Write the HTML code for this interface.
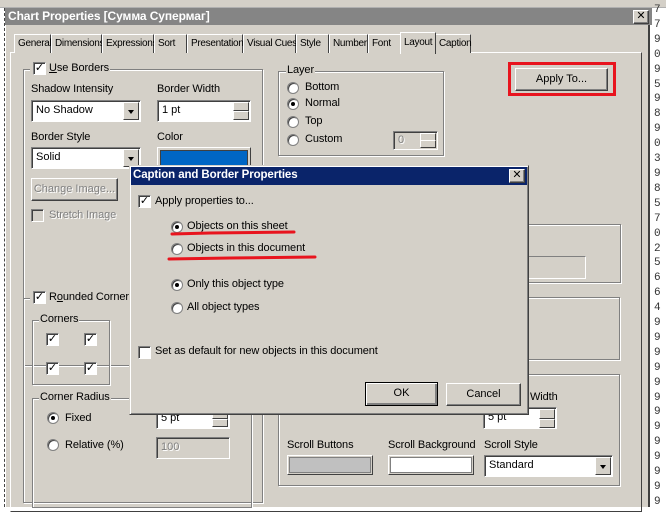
<!DOCTYPE html>
<html><head><meta charset="utf-8"><style>
*{box-sizing:border-box;margin:0;padding:0}
body{width:666px;height:507px;overflow:hidden;background:#fff;font-family:"Liberation Sans","DejaVu Sans",sans-serif;font-size:11px;color:#000;position:relative}
.a{position:absolute}
.t{position:absolute;white-space:nowrap;font-size:11px;letter-spacing:-0.1px}
.grp{position:absolute;border:1px solid #808080;box-shadow:1px 1px 0 #fff, inset 1px 1px 0 #fff}
.in{position:absolute;background:#fff;border:1px solid;border-color:#808080 #fff #fff #808080;box-shadow:inset 1px 1px 0 #404040;padding:3px 0 0 4px;font-size:11px;white-space:nowrap}
.btn{position:absolute;background:#d4d0c8;border:1px solid;border-color:#fff #404040 #404040 #fff;box-shadow:inset -1px -1px 0 #808080;text-align:center;font-size:11px;white-space:nowrap}
.cb{position:absolute;width:13px;height:13px;background:#fff;border:1px solid;border-color:#808080 #fff #fff #808080;box-shadow:inset 1px 1px 0 #404040;font-size:11px;line-height:10px;text-align:center;font-weight:bold}
.rd{position:absolute;width:12px;height:12px;border-radius:50%;background:#fff;border:1px solid #808080;box-shadow:inset 1px 1px 0 #404040}
.rd.on::after{content:"";position:absolute;left:3px;top:3px;width:4px;height:4px;border-radius:50%;background:#000}
.dd{position:absolute;right:1px;top:1px;bottom:1px;width:16px;background:#d4d0c8;border:1px solid;border-color:#fff #404040 #404040 #fff}
.dd::after{content:"";position:absolute;left:4px;top:7px;border:3px solid transparent;border-top:4px solid #000}
.sp{position:absolute;width:16px;background:#d4d0c8;border:1px solid;border-color:#fff #404040 #404040 #fff}
.tab{position:absolute;top:34px;height:19px;border:1px solid;border-color:#fff #404040 transparent #fff;border-bottom:none;padding:3px 0 0 3px;font-size:10px;letter-spacing:-0.3px;white-space:nowrap;background:#d4d0c8}
.dis{color:#808080;text-shadow:1px 1px 0 #fff}
</style></head><body>
<div class="a" style="left:0;top:0;width:666px;height:8px;background:#d4d0c8;border-bottom:1px solid #b0b0b0"></div>
<div class="a" style="left:0;top:8px;width:5px;height:499px;background:#fff;border-right:1px dashed #444"></div>
<div class="a" style="left:648px;top:8px;width:18px;height:499px;background:#fff;border-left:2px solid #404040"></div>
<div class="a" style="left:654px;top:3px;width:12px;font-family:'Liberation Mono',monospace;font-size:11px;line-height:14.9px;color:#333">7<br>7<br>9<br>0<br>9<br>5<br>9<br>8<br>9<br>0<br>3<br>9<br>8<br>5<br>7<br>0<br>2<br>5<br>6<br>6<br>4<br>9<br>9<br>9<br>9<br>9<br>9<br>9<br>9<br>9<br>9<br>9<br>9<br>9</div>
<div class="a" style="left:5px;top:8px;width:643px;height:499px;background:#d4d0c8;border-left:1px solid #fff"></div>
<div class="a" style="left:5px;top:8px;width:647px;height:17px;background:#858585"></div>
<div class="t" style="left:8px;top:9px;color:#fff;font-weight:bold;font-size:12px">Chart Properties [Сумма Супермаг]</div>
<div class="btn" style="left:633px;top:10px;width:16px;height:14px;font-weight:bold;line-height:11px">✕</div>
<div class="a" style="left:10px;top:52px;width:632px;height:460px;border:1px solid;border-color:#fff #404040 #404040 #fff"></div>
<div class="tab" style="left:14px;width:37px">General</div>
<div class="tab" style="left:51px;width:51px">Dimensions</div>
<div class="tab" style="left:102px;width:52px">Expressions</div>
<div class="tab" style="left:154px;width:33px">Sort</div>
<div class="tab" style="left:187px;width:56px">Presentation</div>
<div class="tab" style="left:243px;width:53px">Visual Cues</div>
<div class="tab" style="left:296px;width:33px">Style</div>
<div class="tab" style="left:329px;width:39px">Number</div>
<div class="tab" style="left:368px;width:33px">Font</div>
<div class="tab" style="left:400px;top:32px;height:22px;width:36px;padding-top:4px;z-index:2">Layout</div>
<div class="tab" style="left:435px;width:36px">Caption</div>

<div class="grp" style="left:23px;top:69px;width:240px;height:297px"></div>
<div class="a" style="left:30px;top:62px;width:80px;height:14px;background:#d4d0c8"></div>
<div class="cb" style="left:33px;top:62px">✓</div>
<div class="t" style="left:49px;top:62px"><u>U</u>se Borders</div>
<div class="t" style="left:31px;top:83px">Shadow Intensity</div>
<div class="in" style="left:31px;top:100px;width:110px;height:22px">No Shadow<div class="dd"></div></div>
<div class="t" style="left:157px;top:83px">Border Width</div>
<div class="in" style="left:157px;top:100px;width:94px;height:22px">1 pt<div class="sp" style="right:1px;top:1px;height:9px"></div><div class="sp" style="right:1px;top:10px;height:9px"></div></div>
<div class="t" style="left:31px;top:131px">Border Style</div>
<div class="in" style="left:31px;top:147px;width:110px;height:22px">Solid<div class="dd"></div></div>
<div class="t" style="left:157px;top:131px">Color</div>
<div class="a" style="left:157px;top:147px;width:94px;height:22px;border:1px solid;border-color:#fff #404040 #404040 #fff;padding:2px;background:#d4d0c8"><div style="width:100%;height:100%;background:#0066c4;border:1px solid #404040"></div></div>
<div class="btn dis" style="left:31px;top:178px;width:87px;height:23px;line-height:20px">Change Image...</div>
<div class="cb" style="left:31px;top:209px;background:#d4d0c8"></div>
<div class="t dis" style="left:49px;top:209px">Stretch Image</div>

<div class="grp" style="left:23px;top:298px;width:240px;height:205px"></div>
<div class="a" style="left:30px;top:291px;width:100px;height:14px;background:#d4d0c8"></div>
<div class="cb" style="left:33px;top:291px">✓</div>
<div class="t" style="left:49px;top:291px">R<u>o</u>unded Corners</div>
<div class="grp" style="left:32px;top:320px;width:78px;height:65px"></div>
<div class="t" style="left:39px;top:313px;background:#d4d0c8;padding:0 1px">Corners</div>
<div class="cb" style="left:46px;top:333px">✓</div><div class="cb" style="left:84px;top:333px">✓</div>
<div class="cb" style="left:46px;top:362px">✓</div><div class="cb" style="left:84px;top:362px">✓</div>
<div class="grp" style="left:32px;top:398px;width:220px;height:110px"></div>
<div class="t" style="left:39px;top:391px;background:#d4d0c8;padding:0 1px">Corner Radius</div>
<div class="rd on" style="left:47px;top:412px"></div><div class="t" style="left:65px;top:412px">Fixed</div>
<div class="rd" style="left:47px;top:439px"></div><div class="t" style="left:65px;top:439px">Relative (%)</div>
<div class="in" style="left:156px;top:408px;width:74px;height:21px">5 pt<div class="sp" style="right:1px;top:1px;height:9px"></div><div class="sp" style="right:1px;top:10px;height:8px"></div></div>
<div class="in dis" style="left:156px;top:437px;width:74px;height:22px;background:#d4d0c8">100</div>

<div class="grp" style="left:278px;top:71px;width:166px;height:85px"></div>
<div class="t" style="left:286px;top:64px;background:#d4d0c8;padding:0 1px">Layer</div>
<div class="rd" style="left:287px;top:82px"></div><div class="t" style="left:305px;top:81px">Bottom</div>
<div class="rd on" style="left:287px;top:98px"></div><div class="t" style="left:305px;top:97px">Normal</div>
<div class="rd" style="left:287px;top:116px"></div><div class="t" style="left:305px;top:115px">Top</div>
<div class="rd" style="left:287px;top:134px"></div><div class="t" style="left:305px;top:133px">Custom</div>
<div class="in dis" style="left:393px;top:131px;width:45px;height:19px;background:#d4d0c8;padding-top:2px">0<div class="sp" style="right:1px;top:1px;height:8px"></div><div class="sp" style="right:1px;top:8px;height:8px"></div></div>

<div class="a" style="left:508px;top:62px;width:108px;height:34px;border:3px solid #e8141e"></div>
<div class="btn" style="left:515px;top:68px;width:93px;height:23px;line-height:20px">Apply To...</div>

<div class="grp" style="left:278px;top:224px;width:343px;height:59px"></div>
<div class="a" style="left:430px;top:256px;width:156px;height:23px;border:1px solid;border-color:#808080 #fff #fff #808080"></div>
<div class="grp" style="left:278px;top:297px;width:342px;height:63px"></div>
<div class="grp" style="left:278px;top:374px;width:342px;height:112px"></div>
<div class="t" style="left:530px;top:391px">Width</div>
<div class="in" style="left:483px;top:407px;width:74px;height:22px">5 pt<div class="sp" style="right:1px;top:1px;height:10px"></div><div class="sp" style="right:1px;top:11px;height:9px"></div></div>
<div class="t" style="left:287px;top:439px">Scroll Buttons</div>
<div class="a" style="left:287px;top:455px;width:86px;height:20px;border:1px solid;border-color:#fff #404040 #404040 #fff;padding:1px"><div style="width:100%;height:100%;background:#c0c0c0;border:1px solid #808080"></div></div>
<div class="t" style="left:388px;top:439px">Scroll Background</div>
<div class="a" style="left:388px;top:455px;width:86px;height:20px;border:1px solid;border-color:#fff #404040 #404040 #fff;padding:1px"><div style="width:100%;height:100%;background:#fff;border:1px solid #808080"></div></div>
<div class="t" style="left:484px;top:439px">Scroll Style</div>
<div class="in" style="left:484px;top:455px;width:129px;height:22px">Standard<div class="dd"></div></div>

<div class="a" style="left:129px;top:165px;width:400px;height:250px;background:#d4d0c8;border:1px solid;border-color:#d4d0c8 #404040 #404040 #d4d0c8;box-shadow:inset 1px 1px 0 #fff,inset -1px -1px 0 #808080"></div>
<div class="a" style="left:131px;top:167px;width:396px;height:18px;background:#0a246a"></div>
<div class="t" style="left:133px;top:169px;color:#fff;font-weight:bold;font-size:11.5px">Caption and Border Properties</div>
<div class="btn" style="left:509px;top:169px;width:16px;height:14px;font-weight:bold;line-height:11px">✕</div>
<div class="cb" style="left:138px;top:195px">✓</div><div class="t" style="left:155px;top:195px">Apply properties to...</div>
<div class="rd on" style="left:171px;top:221px"></div><div class="t" style="left:187px;top:220px">Objects on this sheet</div>
<div class="rd" style="left:171px;top:243px"></div><div class="t" style="left:187px;top:242px">Objects in this document</div>
<div class="rd on" style="left:171px;top:279px"></div><div class="t" style="left:187px;top:278px">Only this object type</div>
<div class="rd" style="left:171px;top:302px"></div><div class="t" style="left:187px;top:301px">All object types</div>
<div class="cb" style="left:138px;top:346px"></div><div class="t" style="left:155px;top:345px">Set as default for new objects in this document</div>
<div class="btn" style="left:365px;top:382px;width:73px;height:24px;line-height:20px;border-color:#000;box-shadow:inset 1px 1px 0 #fff,inset -2px -2px 0 #808080">OK</div>
<div class="btn" style="left:446px;top:383px;width:75px;height:23px;line-height:20px">Cancel</div>
<svg class="a" style="left:0;top:0" width="666" height="507"><path d="M172 234 L210 233 L294 232" stroke="#e8141e" stroke-width="3" fill="none" stroke-linecap="round"/><path d="M169 259 L230 258 L315 257" stroke="#e8141e" stroke-width="3" fill="none" stroke-linecap="round"/></svg>
</body></html>
